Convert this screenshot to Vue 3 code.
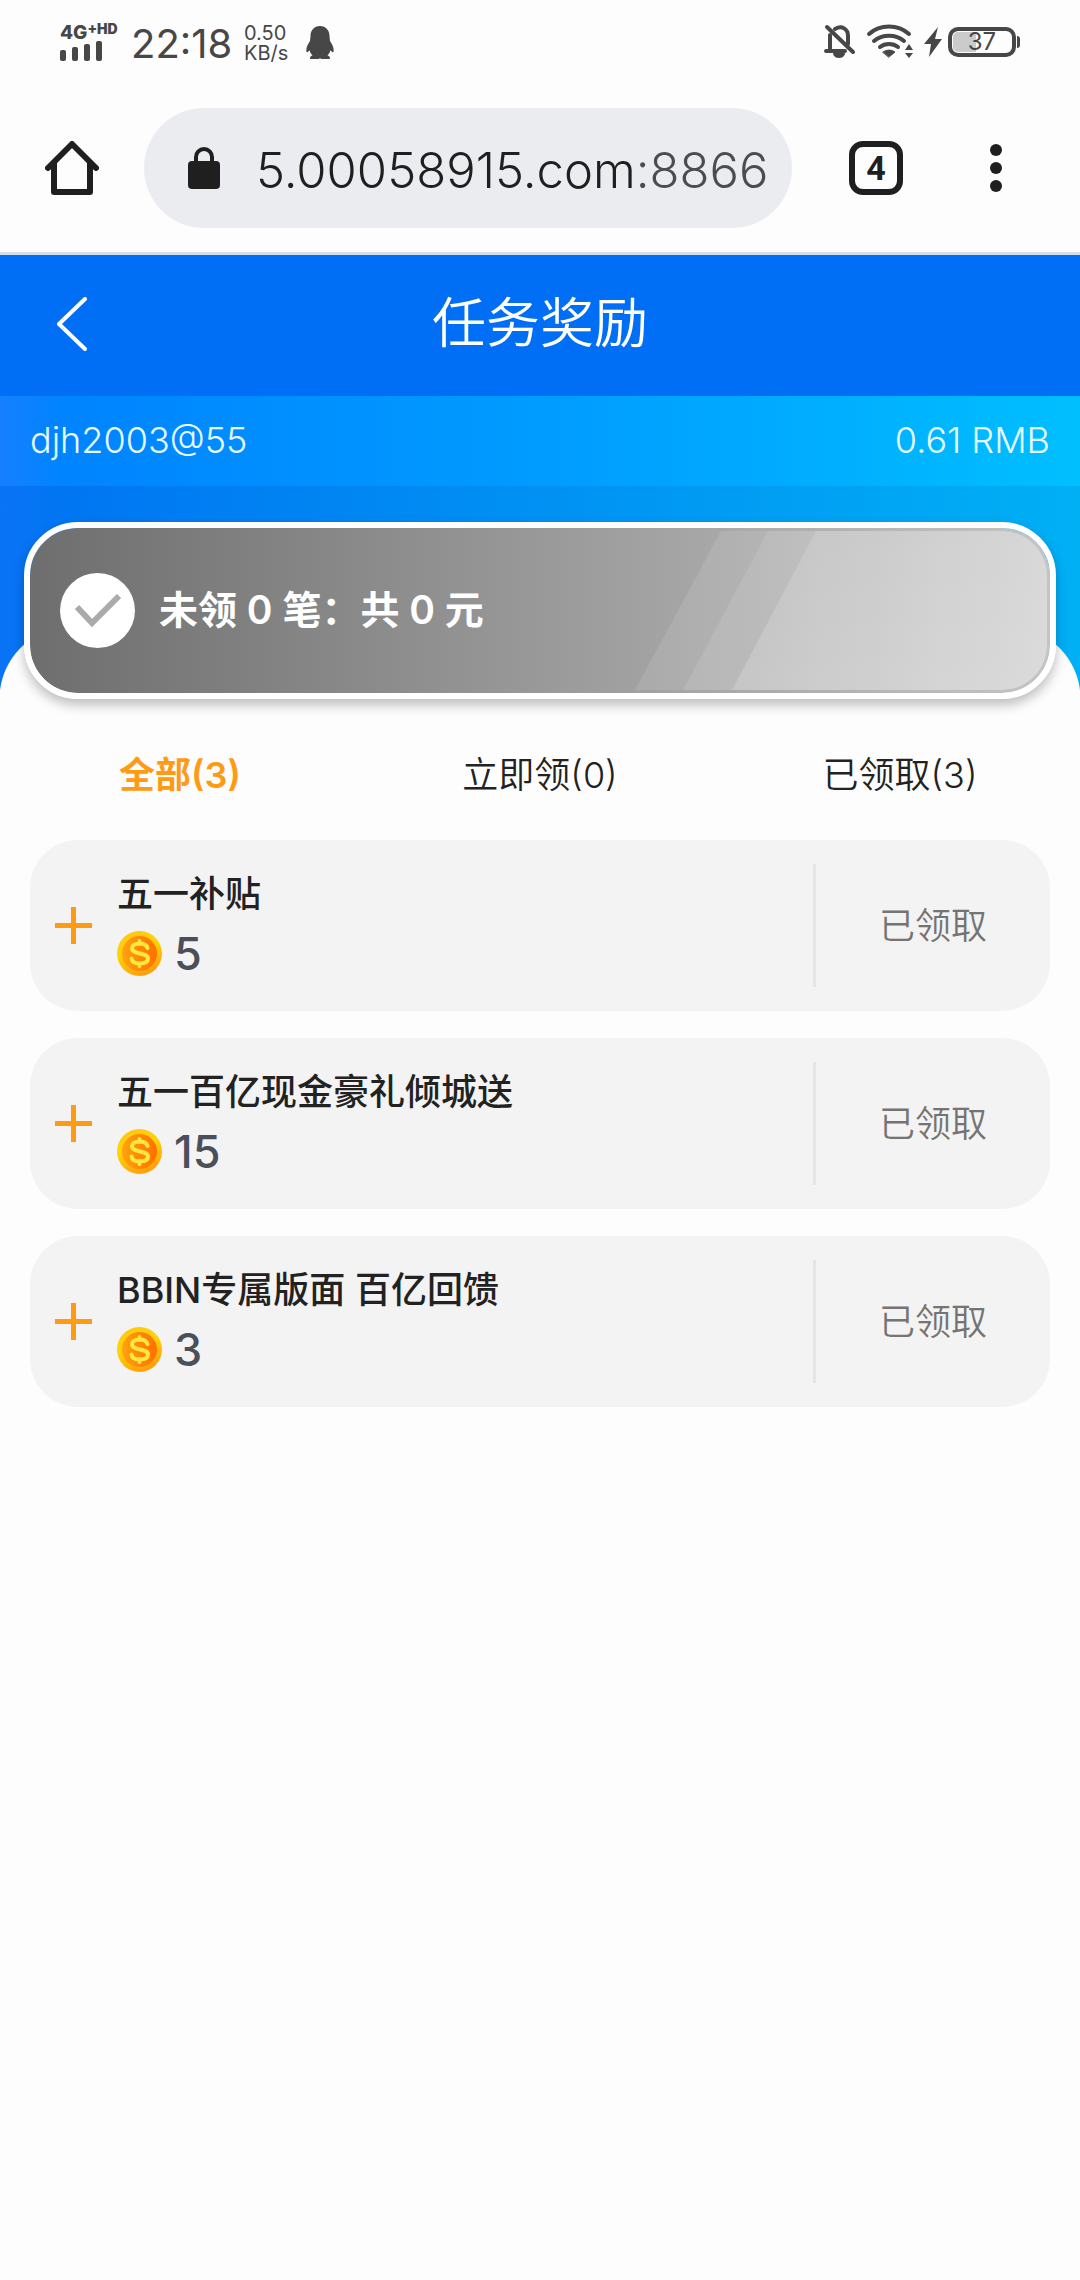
<script setup>
import { ref } from 'vue'

const address = ref('5.00058915.com:8866')
const active = ref('all')

const tabs = [
  { id: 'all', label: '全部', count: 3 },
  { id: 'ready', label: '立即领', count: 0 },
  { id: 'done', label: '已领取', count: 3 }
]

const rewards = [
  { id: 1, title: '五一补贴', amount: 5 },
  { id: 2, title: '五一百亿现金豪礼倾城送', amount: 15 },
  { id: 3, title: 'BBIN专属版面 百亿回馈', amount: 3 }
]
</script>

<template>
  <div class="screen">
    <div class="status">
      <div class="network">
        <div class="network-type">4G<b>+HD</b></div>
        <svg width="42" height="20" viewBox="0 0 42 20" fill="#474747" aria-hidden="true">
          <rect x="0" y="9" width="6" height="11" rx="2" />
          <rect x="12" y="6" width="6" height="14" rx="2" />
          <rect x="24" y="3" width="6" height="17" rx="2" />
          <rect x="36" y="0" width="6" height="20" rx="2" />
        </svg>
      </div>
      <div class="clock">22:18</div>
      <div class="speed"><span>0.50</span><span>KB/s</span></div>
      <svg class="penguin" width="28" height="34" viewBox="0 0 28 34" fill="#474747" aria-hidden="true">
        <path d="M14 0C8 0 4.500 4.500 4.500 10L4 15C2 18 .4 21 .3 24c0 3 1.200 3 3.200.3.500 2 1.500 3.700 3 5-2 .8-2.800 2-2.300 3.700h8.300l1.500-.8 1.500.8h8.300c.5-1.700-.3-2.900-2.300-3.700 1.500-1.300 2.500-3 3-5 2 2.700 3.200 2.700 3.200-.3-.1-3-1.700-6-3.700-9l-.5-5C23.500 4.500 20 0 14 0z" />
      </svg>
      <div class="status-right">
        <svg width="32" height="36" viewBox="0 0 32 36" fill="none" stroke="#474747" stroke-width="4" stroke-linecap="round" stroke-linejoin="round" aria-hidden="true">
          <path d="M6 11v15M2 27h19M11 5c7-4 13 0 13 7v8" />
          <path d="M3 3l26 25" />
          <path d="M10 30c2 4 8 4 10 0z" fill="#474747" stroke-width="2" />
        </svg>
        <svg width="48" height="36" viewBox="0 0 48 36" fill="none" stroke="#474747" stroke-width="4" stroke-linecap="round" aria-hidden="true">
          <path d="M3 10c11-10 29-10 40 0M8 17c8-7 22-7 30 0M14 23c5-4 13-4 18 0" />
          <path d="M17 28q6-4 12 0l-6 5z" fill="#474747" stroke-width="1" />
          <path d="M43 20l4 6h-8zM43 34l4-5h-8z" fill="#474747" stroke="none" />
        </svg>
        <svg class="bolt" width="18" height="30" viewBox="0 0 18 30" fill="#474747" aria-hidden="true">
          <path d="M14 0L0 17h7L5 30 18 12h-7z" />
        </svg>
        <div class="battery"><span>37</span></div>
      </div>
    </div>

    <div class="browser">
      <button class="home" type="button" aria-label="主页">
        <svg width="54" height="54" viewBox="0 0 54 54" fill="none" stroke="#1f1f1f" stroke-width="6" stroke-linecap="round" stroke-linejoin="round" aria-hidden="true">
          <path d="M3 27L27 3l24 24" />
          <path d="M9 22v29h36V22" />
        </svg>
      </button>
      <label class="address">
        <svg width="32" height="42" viewBox="0 0 32 42" aria-hidden="true">
          <rect x="0" y="14" width="32" height="28" rx="4" fill="#1f1f1f" />
          <path d="M8 16V10a8 8 0 0 1 16 0v6" fill="none" stroke="#1f1f1f" stroke-width="4" />
        </svg>
        <input v-model="address" type="text" aria-label="网址" />
      </label>
      <button class="count" type="button" aria-label="标签页">4</button>
      <button class="menu" type="button" aria-label="菜单">
        <svg width="12" height="48" viewBox="0 0 12 48" fill="#1f1f1f" aria-hidden="true">
          <circle cx="6" cy="6" r="6" /><circle cx="6" cy="24" r="6" /><circle cx="6" cy="42" r="6" />
        </svg>
      </button>
    </div>

    <header class="titlebar">
      <button class="back" type="button" aria-label="返回">
        <svg width="30" height="54" viewBox="0 0 30 54" fill="none" stroke="#fff" stroke-width="4" stroke-linecap="round" stroke-linejoin="round" aria-hidden="true">
          <path d="M28 2L2 27l26 25" />
        </svg>
      </button>
      <h1>任务奖励</h1>
    </header>

    <div class="account">
      <span>djh2003@55</span>
      <span>0.61 RMB</span>
    </div>

    <main>
      <section class="hero">
        <button class="summary" type="button">
          <svg class="shine" width="412" height="159" viewBox="0 0 412 159" aria-hidden="true">
            <defs>
              <linearGradient id="shine" x1="0" y1="0" x2="1" y2="1">
                <stop offset="0" stop-color="#fff" stop-opacity=".12" />
                <stop offset="1" stop-color="#fff" stop-opacity=".26" />
              </linearGradient>
            </defs>
            <path d="M86 0H412V159H0z" fill="#fff" fill-opacity=".1" />
            <path d="M133 0H412V159H48z" fill="#fff" fill-opacity=".1" />
            <path d="M181 0H412V159H97z" fill="url(#shine)" />
          </svg>
          <svg class="tick" width="75" height="75" viewBox="0 0 75 75" aria-hidden="true">
            <circle cx="37.500" cy="37.500" r="37.500" fill="#fff" />
            <path d="M17 34l15 16 27-27" fill="none" stroke="#aaa" stroke-width="6" />
          </svg>
          <span>未领 0 笔：共 0 元</span>
        </button>
      </section>

      <nav class="tabs">
        <button
          v-for="tab in tabs"
          :key="tab.id"
          type="button"
          :class="{ active: tab.id === active }"
          @click="active = tab.id"
        >{{ tab.label }}({{ tab.count }})</button>
      </nav>

      <ul class="rewards">
        <li v-for="item in rewards" :key="item.id">
          <button class="expand" type="button" aria-label="展开">
            <svg width="37" height="37" viewBox="0 0 37 37" fill="#ff9a14" aria-hidden="true">
              <path d="M16 0h5v16h16v5H21v16h-5V21H0v-5h16z" />
            </svg>
          </button>
          <div class="info">
            <h2>{{ item.title }}</h2>
            <div class="amount">
              <svg width="45" height="45" viewBox="0 0 45 45" aria-hidden="true">
                <defs>
                  <linearGradient :id="'rim' + item.id" x1=".2" y1="0" x2=".6" y2="1">
                    <stop offset="0" stop-color="#ffc414" />
                    <stop offset=".4" stop-color="#ffd600" />
                    <stop offset="1" stop-color="#ff9d0c" />
                  </linearGradient>
                  <linearGradient :id="'face' + item.id" x1="0" y1="0" x2="1" y2="0">
                    <stop offset="0" stop-color="#ffa112" />
                    <stop offset="1" stop-color="#ff7000" />
                  </linearGradient>
                </defs>
                <circle cx="22.500" cy="22.500" r="22.500" :fill="`url(#rim${item.id})`" />
                <circle cx="22.500" cy="22.500" r="17.500" :fill="`url(#face${item.id})`" />
                <path d="M30.500 17c-1-3.500-4-4.500-8-4.500-4.500 0-7.500 1.800-7.500 4.700 0 6.800 16 3.800 16 10.300 0 3.300-3.500 5-8.500 5s-7.500-1.500-8-5M22.500 10v3M22.500 32v3" fill="none" stroke="#ffe83d" stroke-width="4" stroke-linecap="round" />
              </svg>
              <span>{{ item.amount }}</span>
            </div>
          </div>
          <div class="state">已领取</div>
        </li>
      </ul>
    </main>
  </div>
</template>

<style>
body {
  margin: 0;
  background: #fdfdfd;
}
</style>

<style scoped>
.screen {
  min-height: 100vh;
  background: #fdfdfd;
  color: #222;
  font-family: Inter, "Noto Sans CJK SC", sans-serif;
  font-size: 36px;
}

button,
input {
  margin: 0;
  padding: 0;
  border: 0;
  background: none;
  color: inherit;
  font: inherit;
}

svg {
  display: block;
  flex: none;
}

.status {
  display: flex;
  align-items: center;
  height: 84px;
  padding: 0 64px 0 60px;
  color: #474747;
}

.network {
  width: 71px;
}

.network svg {
  margin-top: -2px;
}

.network-type {
  display: flex;
  font-size: 19px;
  font-weight: 800;
  line-height: 20px;
}

.network-type b {
  font-size: 14px;
  line-height: 12px;
}

.clock {
  width: 113px;
  padding-top: 4px;
  font-size: 40px;
  line-height: 48px;
}

.speed {
  display: flex;
  flex-direction: column;
  width: 62px;
  padding-top: 2px;
  font-size: 20px;
  line-height: 20px;
}

.penguin {
  margin-top: 2px;
}

.status-right {
  display: flex;
  align-items: center;
  margin-left: auto;
}

.status-right svg {
  margin-right: 10px;
}

.status-right .bolt {
  margin-right: 6px;
}

.battery {
  position: relative;
  display: flex;
  align-items: center;
  justify-content: center;
  box-sizing: border-box;
  width: 68px;
  height: 30px;
  border: 4px solid #474747;
  border-radius: 10px;
  background: linear-gradient(90deg, #cbcbcb 24px, #fdfdfd 24px);
  box-shadow: inset 0 0 0 1px #fdfdfd;
  font-size: 24px;
  line-height: 24px;
}

.battery::after {
  content: "";
  position: absolute;
  top: 5px;
  right: -8px;
  width: 3px;
  height: 12px;
  border-radius: 0 3px 3px 0;
  background: #474747;
}

.browser {
  display: flex;
  align-items: center;
  height: 168px;
  padding: 0 78px 0 45px;
  border-bottom: 3px solid #d2e1ec;
}

.address {
  display: flex;
  flex: 1;
  align-items: center;
  gap: 36px;
  min-width: 0;
  height: 120px;
  margin: 0 57px 0 45px;
  padding: 0 12px 0 44px;
  border-radius: 60px;
  background: #ebecf0;
}

.address input {
  flex: 1;
  min-width: 0;
  height: 72px;
  padding-top: 4px;
  outline: 0;
  background: linear-gradient(90deg, #1f1f1f 380px, #4a4c50 380px);
  background-clip: text;
  -webkit-text-fill-color: transparent;
  font-size: 49px;
  font-weight: 300;
}

.count {
  box-sizing: border-box;
  width: 54px;
  height: 54px;
  border: 6px solid #1f1f1f;
  border-radius: 14px;
  color: #1f1f1f;
  font-family: Roboto, sans-serif;
  font-size: 34px;
  font-weight: 700;
  line-height: 42px;
}

.menu {
  margin-left: 87px;
}

.titlebar {
  position: relative;
  display: flex;
  align-items: center;
  justify-content: center;
  box-sizing: border-box;
  height: 141px;
  padding-bottom: 4px;
  background: #006ef5;
  color: #fff;
}

.back {
  position: absolute;
  left: 57px;
}

h1 {
  margin: 0;
  font-size: 54px;
  font-weight: 350;
  line-height: 72px;
}

.account {
  display: flex;
  align-items: center;
  justify-content: space-between;
  box-sizing: border-box;
  height: 90px;
  padding: 0 30px 2px;
  background: linear-gradient(90deg, #1580ff 0, #0084ff 6%, #009cff 50%, #00bfff 100%);
  color: #e6fbff;
  font-weight: 350;
}

.hero {
  padding: 36px 24px 0;
  background:
    radial-gradient(circle at 72px 72px, #fdfdfd 72px, transparent 73px) 0 100% / 72px 72px no-repeat,
    radial-gradient(circle at 0 72px, #fdfdfd 72px, transparent 73px) 100% 100% / 72px 72px no-repeat,
    linear-gradient(#fdfdfd, #fdfdfd) 50% 100% / calc(100% - 144px) 72px no-repeat,
    linear-gradient(90deg, #0a73f6 0, #0076f2 6%, #0091f3 50%, #00b0f5 100%);
}

.summary {
  position: relative;
  display: flex;
  align-items: center;
  gap: 24px;
  box-sizing: border-box;
  width: 100%;
  height: 177px;
  padding-left: 30px;
  border: 6px solid #fff;
  border-radius: 54px;
  background: linear-gradient(90deg, #6e6e6e, #c4c4c4) padding-box;
  box-shadow: 0 6px 12px rgba(0, 0, 0, 0.25);
  color: #fff;
  font-size: 39px;
  font-weight: 600;
}

.summary span {
  padding-bottom: 8px;
}

.shine {
  position: absolute;
  top: 3px;
  right: 3px;
  border-radius: 0 45px 45px 0;
}

.tabs {
  display: grid;
  grid-template-columns: repeat(3, 1fr);
  height: 141px;
}

.tabs button {
  padding-top: 4px;
  font-weight: 350;
}

.tabs .active {
  color: #ff9a14;
  font-weight: 600;
}

.rewards {
  display: flex;
  flex-direction: column;
  gap: 27px;
  margin: 0;
  padding: 0 30px;
  list-style: none;
}

.rewards li {
  display: flex;
  align-items: center;
  height: 171px;
  border-radius: 48px;
  background: #f3f3f3;
}

.expand {
  padding: 0 25px;
}

.info {
  flex: 1;
}

h2 {
  margin: 0;
  font-size: 36px;
  font-weight: 500;
  line-height: 54px;
}

.amount {
  display: flex;
  align-items: center;
  gap: 12px;
  height: 66px;
  color: #4a4f5a;
  font-size: 45px;
  font-weight: 500;
}

.info {
  padding-top: 2px;
}

.state {
  display: flex;
  align-items: center;
  justify-content: center;
  box-sizing: border-box;
  width: 237px;
  height: 123px;
  padding-bottom: 5px;
  border-left: 3px solid #e5e5e5;
  color: #747474;
  font-weight: 350;
}
</style>
